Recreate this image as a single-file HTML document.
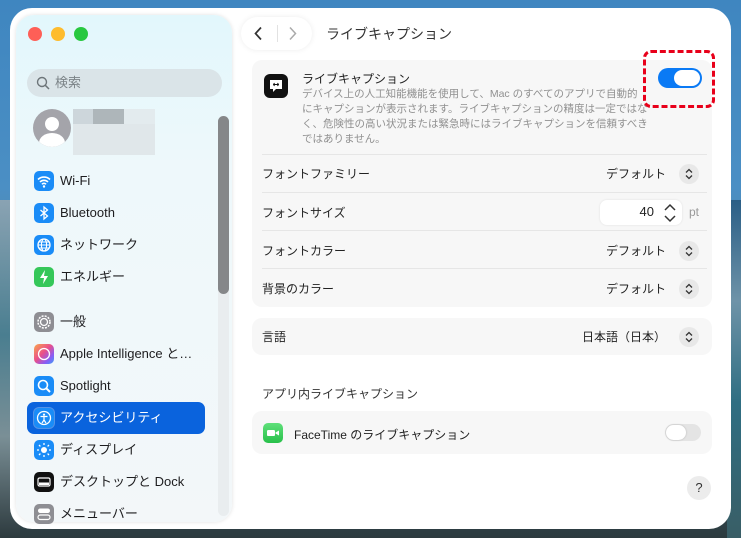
<!DOCTYPE html>
<html><head><meta charset="utf-8">
<style>
*{margin:0;padding:0;box-sizing:border-box}
body{width:741px;height:538px;overflow:hidden;position:relative;font-family:"Liberation Sans","Noto Sans CJK JP",sans-serif;
background:linear-gradient(180deg,#3f86c0 0%,#4b8fc4 35%,#5a7f96 55%,#3d6f80 75%,#2c3a3e 100%);}
.bgl{position:absolute;left:0;top:200px;width:20px;height:338px;background:linear-gradient(180deg,#8aa3b3,#4a7e90 40%,#7a8f96 70%,#2d3a3e)}
.bgr{position:absolute;right:0;top:200px;width:14px;height:338px;background:linear-gradient(180deg,#2a5e86,#6e93a8 30%,#2f6e82 60%,#395e66)}
.win{position:absolute;left:10px;top:8px;width:721px;height:521px;background:#fff;border-radius:22px;overflow:hidden}
.side{position:absolute;left:6px;top:7px;width:216px;height:507px;border-radius:18px;background:linear-gradient(180deg,#e2f7fc 0%,#eef8fb 30%,#f3f7f9 100%);box-shadow:0 0 4px rgba(0,0,0,.12)}
.dot{position:absolute;top:12px;width:14px;height:14px;border-radius:50%}
.search{position:absolute;left:11px;top:54px;width:195px;height:28px;border-radius:14px;background:#dae4e8;color:#7b8387;font-size:13px;line-height:28px;padding-left:28px}
.item{position:absolute;left:11px;width:178px;height:32px;font-size:13px;color:#1d1d1f;line-height:32px;padding-left:33px;white-space:nowrap}
.ic{position:absolute;left:7px;top:6px;width:20px;height:20px;border-radius:5px}
.sel{background:#0a63dd;color:#fff;border-radius:7px}
.card{position:absolute;left:242px;width:460px;background:#f7f7f7;border-radius:10px}
.row{position:absolute;left:252px;font-size:12px;color:#222}
.val{position:absolute;font-size:12px;color:#222;text-align:right}
.sep{position:absolute;left:252px;width:445px;height:1px;background:#e6e6e6}
.pop{position:absolute;width:20px;height:20px;border-radius:50%;background:#e8e8e8}
</style></head><body>
<div class="bgl"></div><div class="bgr"></div>
<div class="win">
 <div class="side">
  <div class="dot" style="left:12px;background:#fe5f57"></div>
  <div class="dot" style="left:35px;background:#febc2e"></div>
  <div class="dot" style="left:58px;background:#28c840"></div>
  <div class="search"><svg style="position:absolute;left:9px;top:7px" width="14" height="14" viewBox="0 0 14 14"><circle cx="6" cy="6" r="4.5" fill="none" stroke="#6d7579" stroke-width="1.4"/><path d="M9.3 9.3L13 13" stroke="#6d7579" stroke-width="1.5"/></svg>検索</div>
  <div style="position:absolute;left:17px;top:94px;width:38px;height:38px;border-radius:50%;background:#a4a4aa;overflow:hidden">
   <div style="position:absolute;left:12px;top:8px;width:14px;height:14px;border-radius:50%;background:#fff"></div>
   <div style="position:absolute;left:6px;top:24px;width:26px;height:20px;border-radius:50%;background:#fff"></div></div>
  <div style="position:absolute;left:57px;top:94px;width:20px;height:15px;background:#cdd6db"></div>
  <div style="position:absolute;left:77px;top:94px;width:31px;height:15px;background:#aeb6ba"></div>
  <div style="position:absolute;left:108px;top:94px;width:31px;height:15px;background:#e3ebee"></div>
  <div style="position:absolute;left:57px;top:109px;width:82px;height:31px;background:#e0e7ea"></div>
  <div style="position:absolute;left:202px;top:101px;width:11px;height:400px;border-radius:6px;background:#e9edef"></div>
  <div style="position:absolute;left:202px;top:101px;width:11px;height:178px;border-radius:6px;background:#858789"></div>

  <div class="item" style="top:150px"><div class="ic" style="background:#1a8cf7"><svg width="20" height="20" viewBox="0 0 20 20"><path d="M4 8.5a8.5 8.5 0 0 1 12 0M6 11a5.5 5.5 0 0 1 8 0M8 13.3a2.5 2.5 0 0 1 4 0" fill="none" stroke="#fff" stroke-width="1.6"/><circle cx="10" cy="15.5" r="1.2" fill="#fff"/></svg></div>Wi-Fi</div>
  <div class="item" style="top:182px"><div class="ic" style="background:#1a8cf7"><svg width="20" height="20" viewBox="0 0 20 20"><path d="M6.5 7l7 6-3.5 3V4l3.5 3-7 6" fill="none" stroke="#fff" stroke-width="1.3"/></svg></div>Bluetooth</div>
  <div class="item" style="top:214px"><div class="ic" style="background:#1a8cf7"><svg width="20" height="20" viewBox="0 0 20 20"><circle cx="10" cy="10" r="6" fill="none" stroke="#fff" stroke-width="1.3"/><ellipse cx="10" cy="10" rx="2.6" ry="6" fill="none" stroke="#fff" stroke-width="1.1"/><path d="M4 10h12M5 7h10M5 13h10" stroke="#fff" stroke-width="1"/></svg></div>ネットワーク</div>
  <div class="item" style="top:246px"><div class="ic" style="background:#35c759"><svg width="20" height="20" viewBox="0 0 20 20"><path d="M11 3L6 11h4l-1 6 5-8h-4z" fill="#fff"/></svg></div>エネルギー</div>
  <div class="item" style="top:291px"><div class="ic" style="background:#8e8e93"><svg width="20" height="20" viewBox="0 0 20 20"><circle cx="10" cy="10" r="6" fill="none" stroke="#fff" stroke-width="1.5" stroke-dasharray="2 1.2"/><circle cx="10" cy="10" r="3.5" fill="none" stroke="#fff" stroke-width="1.3"/></svg></div>一般</div>
  <div class="item" style="top:323px"><div class="ic" style="background:linear-gradient(135deg,#f9a64a,#e94f8a 45%,#8a5cf5 75%,#3aa0f5)"><svg width="20" height="20" viewBox="0 0 20 20"><circle cx="10" cy="10" r="5.5" fill="none" stroke="#fff" stroke-width="1.3"/></svg></div>Apple Intelligence と…</div>
  <div class="item" style="top:355px"><div class="ic" style="background:#1a8cf7"><svg width="20" height="20" viewBox="0 0 20 20"><circle cx="9" cy="9" r="4.5" fill="none" stroke="#fff" stroke-width="1.6"/><path d="M12.3 12.3L16 16" stroke="#fff" stroke-width="2"/></svg></div>Spotlight</div>
  <div class="item sel" style="top:387px"><div class="ic" style="background:#1a8cf7;box-shadow:0 0 0 1px rgba(255,255,255,.3)"><svg width="20" height="20" viewBox="0 0 20 20"><circle cx="10" cy="10" r="6.5" fill="none" stroke="#fff" stroke-width="1.3"/><circle cx="10" cy="6.6" r="1.1" fill="#fff"/><path d="M6.5 8.5h7M10 8.5v3.5l-2 3M10 12l2 3" fill="none" stroke="#fff" stroke-width="1.2"/></svg></div>アクセシビリティ</div>
  <div class="item" style="top:419px"><div class="ic" style="background:#1a8cf7"><svg width="20" height="20" viewBox="0 0 20 20"><circle cx="10" cy="10" r="3" fill="#fff"/><path d="M10 3v2M10 15v2M3 10h2M15 10h2M5 5l1.4 1.4M13.6 13.6L15 15M5 15l1.4-1.4M13.6 6.4L15 5" stroke="#fff" stroke-width="1.3"/></svg></div>ディスプレイ</div>
  <div class="item" style="top:451px"><div class="ic" style="background:#111"><svg width="20" height="20" viewBox="0 0 20 20"><rect x="4" y="6" width="12" height="8" rx="1.5" fill="none" stroke="#fff" stroke-width="1.2"/><rect x="5" y="10.5" width="10" height="2.5" fill="#fff"/></svg></div>デスクトップと Dock</div>
  <div class="item" style="top:483px"><div class="ic" style="background:#8e8e93"><svg width="20" height="20" viewBox="0 0 20 20"><rect x="4" y="4.5" width="12" height="4.5" rx="2.2" fill="#fff"/><rect x="4" y="11" width="12" height="4.5" rx="2.2" fill="none" stroke="#fff" stroke-width="1.2"/></svg></div>メニューバー</div>
 </div>

 <div style="position:absolute;left:231px;top:9px;width:71px;height:33px;border-radius:17px;background:#fff;box-shadow:0 0 6px rgba(0,0,0,.08)">
  <svg style="position:absolute;left:12px;top:9px" width="12" height="15" viewBox="0 0 12 15"><path d="M8 1.5L2.5 7.5 8 13.5" fill="none" stroke="#333" stroke-width="1.7"/></svg>
  <div style="position:absolute;left:36px;top:8px;width:1px;height:17px;background:#e2e2e2"></div>
  <svg style="position:absolute;left:46px;top:9px" width="12" height="15" viewBox="0 0 12 15"><path d="M3 1.5L8.5 7.5 3 13.5" fill="none" stroke="#aaa" stroke-width="1.5"/></svg>
 </div>
 <div style="position:absolute;left:316px;top:16px;font-size:14px;color:#333">ライブキャプション</div>

 <div class="card" style="top:52px;height:247px"></div>
 <div style="position:absolute;left:254px;top:66px;width:24px;height:24px;border-radius:6px;background:#111">
  <svg width="24" height="24" viewBox="0 0 24 24"><path d="M6 6h12v9h-6l-3 3v-3H6z" fill="#fff"/><path d="M9.5 10.5h5M10.5 9l-1 1.5 1 1.5M13.5 9l1 1.5-1 1.5" stroke="#111" stroke-width="1" fill="none"/></svg></div>
 <div style="position:absolute;left:292px;top:62px;font-size:12px;color:#222">ライブキャプション</div>
 <div style="position:absolute;left:292px;top:79px;font-size:10.5px;line-height:15px;color:#909090;white-space:nowrap">デバイス上の人工知能機能を使用して、Mac のすべてのアプリで自動的<br>にキャプションが表示されます。ライブキャプションの精度は一定ではな<br>く、危険性の高い状況または緊急時にはライブキャプションを信頼すべき<br>ではありません。</div>
 <div style="position:absolute;left:648px;top:60px;width:44px;height:20px;border-radius:10px;background:#0a7af5"><div style="position:absolute;right:2px;top:2px;width:26px;height:16px;border-radius:8px;background:#fff"></div></div>
 <div style="position:absolute;left:633px;top:42px;width:72px;height:58px;border:3px dashed #e8001a;border-radius:8px"></div>

 <div class="sep" style="top:146px"></div>
 <div class="sep" style="top:184px"></div>
 <div class="sep" style="top:222px"></div>
 <div class="sep" style="top:260px"></div>
 <div class="row" style="top:157px">フォントファミリー</div>
 <div class="row" style="top:196px">フォントサイズ</div>
 <div class="row" style="top:234px">フォントカラー</div>
 <div class="row" style="top:272px">背景のカラー</div>

 <div class="val" style="right:65px;top:157px">デフォルト</div><div class="pop" style="left:669px;top:156px"></div>
 <div style="position:absolute;left:590px;top:192px;width:82px;height:25px;border-radius:7px;background:#fff;box-shadow:0 0 2px rgba(0,0,0,.1)"></div>
 <div class="val" style="right:77px;top:196px;font-size:13px">40</div>
 <svg style="position:absolute;left:653px;top:194px" width="14" height="22" viewBox="0 0 14 22"><path d="M2 8l5-5 5 5M2 14l5 5 5-5" fill="none" stroke="#333" stroke-width="1.5"/></svg>
 <div style="position:absolute;left:679px;top:197px;font-size:12px;color:#999">pt</div>
 <div class="val" style="right:65px;top:234px">デフォルト</div><div class="pop" style="left:669px;top:233px"></div>
 <div class="val" style="right:65px;top:272px">デフォルト</div><div class="pop" style="left:669px;top:271px"></div>

 <div class="card" style="top:310px;height:37px"></div>
 <div class="row" style="top:320px">言語</div>
 <div class="val" style="right:65px;top:320px">日本語（日本）</div><div class="pop" style="left:669px;top:319px"></div>

 <div style="position:absolute;left:252px;top:377px;font-size:12px;color:#333">アプリ内ライブキャプション</div>
 <div class="card" style="top:403px;height:43px"></div>
 <div style="position:absolute;left:253px;top:415px;width:20px;height:20px;border-radius:5px;background:linear-gradient(#5fe07a,#28c04a)"><svg width="20" height="20" viewBox="0 0 20 20"><rect x="4" y="7" width="8" height="6" rx="1.3" fill="#fff"/><path d="M12.5 9.5l3.5-2v5l-3.5-2z" fill="#fff"/></svg></div>
 <div style="position:absolute;left:284px;top:418px;font-size:12px;color:#222">FaceTime のライブキャプション</div>
 <div style="position:absolute;left:655px;top:416px;width:36px;height:17px;border-radius:9px;background:#e4e4e4"><div style="position:absolute;left:1px;top:1px;width:20px;height:15px;border-radius:8px;background:#fff;box-shadow:0 0 2px rgba(0,0,0,.2)"></div></div>

 <div style="position:absolute;left:677px;top:468px;width:24px;height:24px;border-radius:50%;background:#ececec;font-size:13px;line-height:24px;text-align:center;color:#333">?</div>
</div>
<script>
document.querySelectorAll('.pop').forEach(p=>{p.innerHTML='<svg width="20" height="20" viewBox="0 0 20 20"><path d="M7 8.5l3-3 3 3M7 11.5l3 3 3-3" fill="none" stroke="#333" stroke-width="1.3"/></svg>'});
</script>
</body></html>
